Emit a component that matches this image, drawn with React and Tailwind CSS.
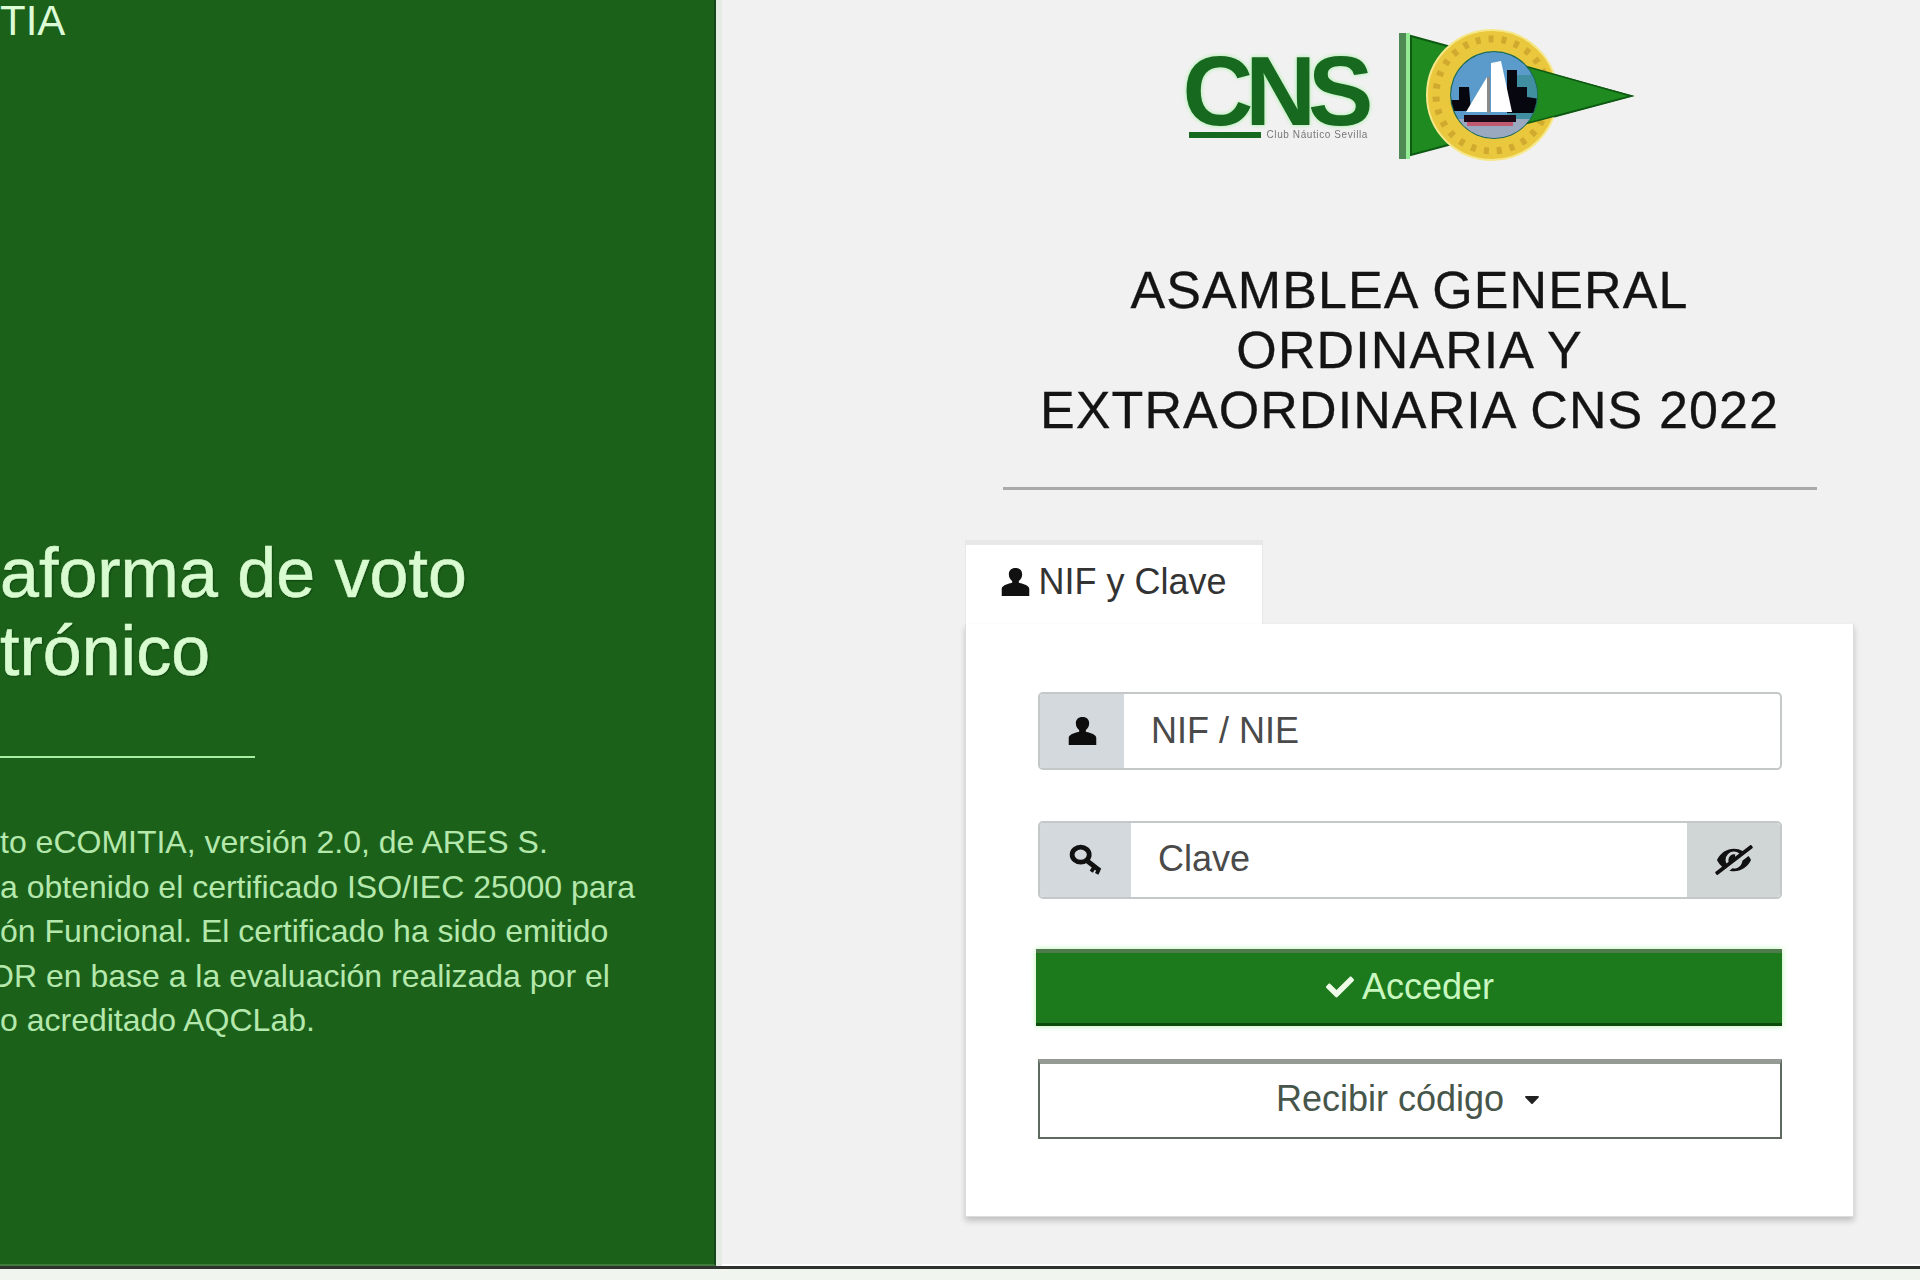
import React from "react";
import { FaCheck, FaCaretDown, FaEyeSlash } from "react-icons/fa";

const UserIcon = ({ className }) => (
  <svg viewBox="2 1 20 22" className={className} fill="currentColor" preserveAspectRatio="none">
    <path d="M12 1c-3 0-4.600 2-4.600 5 0 2.400 1 4.300 2.300 5.300v1.300C6 13.500 2.500 15 2.500 17.500V23h19v-5.500c0-2.500-3.500-4-7.200-4.900v-1.300C15.600 10.300 16.600 8.400 16.600 6c0-3-1.600-5-4.600-5z" />
  </svg>
);

const KeyIcon = ({ className }) => (
  <svg viewBox="0 0 32 30" className={className} fill="none" stroke="currentColor">
    <ellipse cx="11" cy="10" rx="8" ry="7" strokeWidth="4.500" />
    <path d="M16 15 L29 25" strokeWidth="4.500" />
    <path d="M24 21 L21 26 M28 24 L26 28" strokeWidth="3.500" />
  </svg>
);

const Logo = () => (
  <div className="flex items-start h-[160px] w-[460px] blur-[0.7px]">
    <div className="flex flex-col w-[216px] pt-[38px] shrink-0">
      <span className="font-['Liberation_Sans'] font-bold text-[98px] leading-[76px] tracking-[-8px] text-[#17691f] [text-shadow:0_0_4px_#9af09a]">CNS</span>
      <div className="flex items-center gap-[6px] mt-[2px] pl-[6px]">
        <div className="w-[72px] h-[6px] bg-[#17691f]"></div>
        <span className="font-['Liberation_Sans'] text-[10px] leading-[8px] tracking-[0.6px] text-[#777]">Club Náutico Sevilla</span>
      </div>
    </div>
    <svg viewBox="0 0 250 160" className="w-[250px] h-[160px] shrink-0">
      <defs>
        <clipPath id="inner"><circle cx="95" cy="80" r="43" /></clipPath>
      </defs>
      <rect x="0" y="18" width="7" height="126" fill="#4f8a55" />
      <rect x="7" y="18" width="4" height="126" fill="#93ec93" />
      <polygon points="12,21 232,81 12,140" fill="#1f8a1f" stroke="#0d5a12" strokeWidth="2" />
      <circle cx="93" cy="80" r="65" fill="#e9c83d" stroke="#f6e88a" strokeWidth="2" />
      <circle cx="93" cy="80" r="56" fill="none" stroke="#d0a92f" strokeWidth="7" strokeDasharray="5 8" />
      <polygon points="122,50 232,81 122,110" fill="#1f8a1f" stroke="#0d5a12" strokeWidth="1.500" />
      <circle cx="95" cy="80" r="44" fill="#1c6a5a" />
      <g clipPath="url(#inner)">
        <circle cx="95" cy="80" r="43" fill="#5a9bcb" />
        <polygon points="108,60 145,60 145,110 108,110" fill="#3f8fa0" />
        <rect x="50" y="104" width="90" height="20" fill="#9aa8c0" />
        <polygon points="52,96 52,85 60,85 60,72 70,72 72,96" fill="#07070f" />
        <polygon points="108,98 108,55 118,55 118,72 128,72 128,82 141,84 141,98" fill="#07070f" />
        <polygon points="67,97 88,62 88,97" fill="#ffffff" />
        <polygon points="92,97 92,48 102,46 113,97" fill="#ffffff" />
        <rect x="88" y="62" width="3" height="36" fill="#8a8a8a" />
        <rect x="65" y="100" width="52" height="7" fill="#1a0a18" />
        <rect x="68" y="107" width="46" height="4" fill="#c05a70" />
      </g>
    </svg>
  </div>
);

export default function App() {
  return (
    <div className="w-[1920px] h-[1280px] overflow-hidden bg-[#f0f5f0] font-['Liberation_Sans',Arial,sans-serif]">
      <div className="flex h-[1266px]">
        <div className="w-[716px] shrink-0 bg-[#1c611a] overflow-hidden border-r-2 border-r-[#14481a] border-b-2 border-b-[#3f7a3c]">
          <div className="text-[42px] leading-[42px] text-[#dcfbd6]">TIA</div>
          <h1 className="mt-[492px] text-[70px] leading-[78px] font-normal text-[#d8fbd0] [-webkit-text-stroke:0.6px_#d8fbd0] [text-shadow:1px_1px_2px_#0b3d0b]">
            <div>aforma de voto</div>
            <div>trónico</div>
          </h1>
          <div className="mt-[66px] w-[255px] h-[2px] bg-[#a8eea0]"></div>
          <div className="mt-[62px] text-[32px] leading-[44.600px] text-[#b5e8ad]">
            <div>to eCOMITIA, versión 2.0, de ARES S.</div>
            <div>a obtenido el certificado ISO/IEC 25000 para</div>
            <div>ón Funcional. El certificado ha sido emitido</div>
            <div className="-ml-[11px]">OR en base a la evaluación realizada por el</div>
            <div>o acreditado AQCLab.</div>
          </div>
        </div>
        <div className="w-[6px] shrink-0 bg-[#e4ece4]"></div>
        <div className="flex-1 bg-[#f1f1f1] border-b-2 border-b-white pl-[243px] overflow-hidden">
          <div className="w-[889px] flex flex-col">
            <div className="flex justify-center pt-[15px] pl-[6px]">
              <Logo />
            </div>
            <h2 className="mt-[85px] text-center font-normal text-[52px] leading-[60px] tracking-[1.100px] text-[#141414] [-webkit-text-stroke:0.3px_#141414]">
              ASAMBLEA GENERAL
              <br />
              ORDINARIA Y
              <br />
              EXTRAORDINARIA CNS 2022
            </h2>
            <div className="mt-[47px] mx-auto w-[814px] h-[3px] bg-[#a9abab]"></div>
            <div className="mt-[50px] w-[298px] h-[84px] pb-[5px] bg-white border-t-[5px] border-t-[#e8e8e8] border-l border-r border-[#e8e8e8] flex items-center justify-center gap-[8px] text-[36px] leading-[40px] text-[#333]">
              <UserIcon className="w-[29px] h-[28px] text-[#111]" />
              <span>NIF y Clave</span>
            </div>
            <div className="bg-white border border-[#dcdcdc] border-t-0 h-[593px] pt-[68px] pl-[72px] pr-[71px] shadow-[0_4px_6px_rgba(0,0,0,0.2)] flex flex-col">
              <div className="flex h-[78px] w-[744px] rounded-[5px] border-2 border-[#c4c8c8] overflow-hidden bg-white">
                <div className="w-[84px] bg-[#d3d9dc] flex items-center justify-center text-[#0d0d0d]">
                  <UserIcon className="w-[29px] h-[28px]" />
                </div>
                <div className="flex-1 flex items-center pl-[27px] text-[36px] text-[#4a4a4a]">NIF / NIE</div>
              </div>
              <div className="mt-[51px] flex h-[78px] w-[744px] rounded-[5px] border-2 border-[#c4c8c8] overflow-hidden bg-white">
                <div className="w-[91px] bg-[#d3d9dc] flex items-center justify-center text-[#111]">
                  <KeyIcon className="w-[36px] h-[32px]" />
                </div>
                <div className="flex-1 flex items-center pl-[27px] pb-[2px] text-[36px] text-[#4a4a4a]">Clave</div>
                <div className="w-[93px] bg-[#d0d5d6] flex items-center justify-center text-[#111]">
                  <FaEyeSlash className="w-[38px] h-[30px] -scale-x-100" />
                </div>
              </div>
              <div className="mt-[50px] -ml-[2px] w-[746px] h-[77px] pb-[3px] bg-[#1c7a1c] border-t-[4px] border-t-[#4f7a4c] border-b-[3px] border-b-[#0b4c0b] flex items-center justify-center gap-[6px] text-[36px] text-[#c9f7c0] shadow-[0_0_6px_#b8f2b0]">
                <FaCheck className="w-[32px] h-[28px] text-[#eefbe9]" />
                <span>Acceder</span>
              </div>
              <div className="mt-[33px] w-[744px] h-[80px] pb-[4px] bg-white border-2 border-[#5d6a5d] border-t-[5px] border-t-[#959a95] flex items-center justify-center gap-[16px] text-[36px] text-[#47564a]">
                <span>Recibir código</span>
                <FaCaretDown className="w-[24px] h-[24px] text-[#222]" />
              </div>
            </div>
          </div>
        </div>
      </div>
      <div className="h-[3px] bg-[#2e3330]"></div>
    </div>
  );
}
